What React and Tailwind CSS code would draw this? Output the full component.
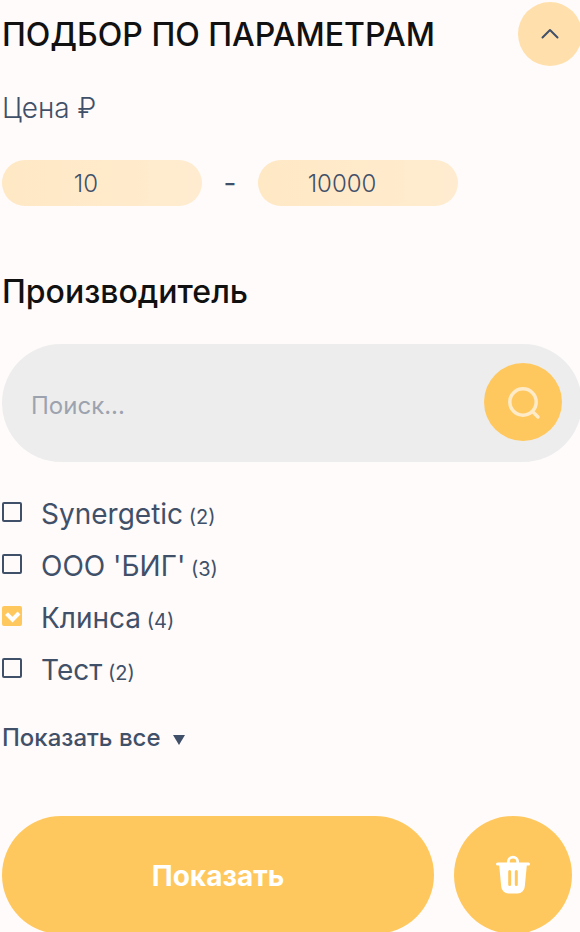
import { useState } from "react";

const brands = [
  { id: "synergetic", name: "Synergetic", count: 2, checked: false },
  { id: "big", name: "ООО 'БИГ'", count: 3, checked: false },
  { id: "klinsa", name: "Клинса", count: 4, checked: true },
  { id: "test", name: "Тест", count: 2, checked: false },
];

function PriceInput({ label, defaultValue }) {
  return (
    <input
      type="text"
      inputMode="numeric"
      aria-label={label}
      defaultValue={defaultValue}
      className="h-[46px] w-[200px] rounded-full bg-linear-to-r from-[#ffe8c4] to-[#ffecd0] pr-8 text-center text-2xl font-light text-[#415069] outline-none"
    />
  );
}

function Brand({ id, name, count, checked }) {
  const [on, setOn] = useState(checked);
  return (
    <li className="flex h-[52px] items-center gap-[19px]">
      <span className="grid h-6 shrink-0 items-start">
        <input
          id={id}
          type="checkbox"
          checked={on}
          onChange={() => setOn(!on)}
          className="peer col-start-1 row-start-1 size-5 appearance-none rounded-[2px] border-2 border-[#415069] checked:border-[#ffc85e] checked:bg-[#ffc85e]"
        />
        <svg
          viewBox="0 0 20 20"
          className="pointer-events-none invisible col-start-1 row-start-1 size-5 peer-checked:visible"
          fill="none"
          stroke="#fff"
          strokeWidth="4"
        >
          <path d="M4.500 7.700 10.500 13.700 17 7" />
        </svg>
      </span>
      <label htmlFor={id} className="text-[28px] leading-[52px] text-[#415069]">
        {name}
        <span className="text-xl"> ({count})</span>
      </label>
    </li>
  );
}

export default function App() {
  return (
    <div className="min-h-screen overflow-hidden bg-[#fffbfa] font-['Inter',sans-serif] text-[#415069]">
      <form className="-mr-0.5 pt-0.5 pl-0.5" onSubmit={(e) => e.preventDefault()}>
        <header className="flex items-center justify-between">
          <h2 className="pt-0.5 text-[32px] leading-10 font-medium text-[#111]">ПОДБОР ПО ПАРАМЕТРАМ</h2>
          <button
            type="button"
            aria-label="Свернуть"
            className="flex size-16 items-center justify-center rounded-full bg-[#ffe0ac]"
          >
            <svg viewBox="0 0 20 20" className="size-5" fill="none" stroke="#415069" strokeWidth="2" strokeLinecap="round" strokeLinejoin="round">
              <path d="M2.500 13.500 10 6l7.500 7.500" />
            </svg>
          </button>
        </header>

        <fieldset>
          <legend className="pt-6 text-[28px] leading-9 font-light">Цена ₽</legend>
          <div className="flex items-center pt-[34px]">
            <PriceInput label="Цена от" defaultValue="10" />
            <span className="w-14 text-center text-[28px]">-</span>
            <PriceInput label="Цена до" defaultValue="10000" />
          </div>
        </fieldset>

        <h3 className="mt-[66px] text-[32px] leading-10 font-medium text-[#111]">Производитель</h3>

        <div className="mt-8 flex h-[118px] items-center rounded-full bg-[#ededed] pr-5 pb-0.5 pl-[29px]">
          <input
            type="search"
            aria-label="Поиск"
            placeholder="Поиск..."
            className="h-16 min-w-0 flex-1 pt-1.5 text-2xl outline-none placeholder:text-[#9ca3af]"
          />
          <button
            type="button"
            aria-label="Найти"
            className="flex size-[78px] items-center justify-center rounded-full bg-[#ffc85e]"
          >
            <svg viewBox="0 0 36 36" className="size-9" fill="none" stroke="#ffebc7" strokeWidth="3.500" strokeLinecap="round">
              <circle cx="18" cy="18" r="13.200" />
              <path d="m27.500 27.500 5.500 5.500" />
            </svg>
          </button>
        </div>

        <ul className="mt-[26px]">
          {brands.map((b) => (
            <Brand key={b.id} {...b} />
          ))}
        </ul>

        <button type="button" className="mt-[26px] flex items-center gap-3 text-2xl leading-8 font-medium">
          Показать все
          <svg viewBox="0 0 12 12" className="mt-1 size-3" fill="#415069">
            <path d="M0 1h12L6 11Z" />
          </svg>
        </button>

        <div className="mt-[62px] flex gap-5 pr-[10px]">
          <button type="submit" className="h-[118px] flex-1 rounded-full bg-[#ffc85e] pt-0.5 text-[28px] font-bold text-white">
            Показать
          </button>
          <button
            type="reset"
            aria-label="Сбросить"
            className="flex size-[118px] items-center justify-center rounded-full bg-[#ffc85e]"
          >
            <svg viewBox="0 0 36 40" className="h-10 w-9" fill="none">
              <path d="M13.300 8V6.900a4.700 4.700 0 0 1 9.400 0V8" stroke="#fff" strokeWidth="2.800" />
              <path
                d="M2.500 7.500h31a1.500 1.500 0 0 1 0 3h-1.700L29.800 31.500a7.500 7.500 0 0 1-7.300 7h-9a7.500 7.500 0 0 1-7.300-7L4.200 10.500H2.500a1.500 1.500 0 0 1 0-3Z"
                fill="#fff"
              />
              <path d="M14.700 16.500v13M21.300 16.500v13" stroke="#ffc85e" strokeWidth="3" strokeLinecap="round" />
            </svg>
          </button>
        </div>
      </form>
    </div>
  );
}
